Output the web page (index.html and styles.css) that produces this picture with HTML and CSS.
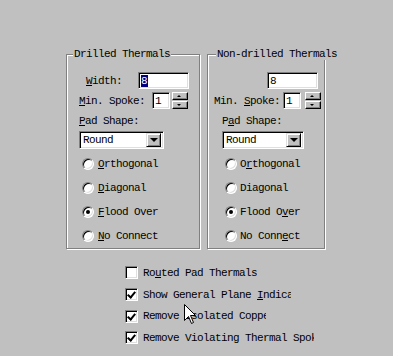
FILE: index.html
```html
<!DOCTYPE html>
<html lang="en">
<head>
  <meta charset="UTF-8" />
  <title>Thermals</title>
  <link rel="stylesheet" href="styles.css">
</head>
<body>
  <div class="dialog">
    <div class="groups">
      <div class="group drilled">
        <div class="legend">Drilled Thermals</div>
        <div class="row width-row">
          <span class="label"><u>W</u>idth:</span>
          <span class="field wide"><span class="sel">8</span></span>
        </div>
        <div class="row spoke-row">
          <span class="label"><u>M</u>in. Spoke:</span>
          <span class="field small">1</span>
          <span class="spin"><span class="up"></span><span class="down"></span></span>
        </div>
        <div class="pad-label"><u>P</u>ad Shape:</div>
        <div class="combo">
          <span class="combo-text">Round</span>
          <span class="combo-btn"></span>
        </div>
        <div class="radios">
          <div class="radio"><span class="dot"></span><span><u>O</u>rthogonal</span></div>
          <div class="radio"><span class="dot"></span><span><u>D</u>iagonal</span></div>
          <div class="radio"><span class="dot on"></span><span><u>F</u>lood Over</span></div>
          <div class="radio"><span class="dot"></span><span><u>N</u>o Connect</span></div>
        </div>
      </div>

      <div class="group nondrilled">
        <div class="legend">Non-drilled Thermals</div>
        <div class="row width-row">
          <span class="field wide">8</span>
        </div>
        <div class="row spoke-row">
          <span class="label">Min. <u>S</u>poke:</span>
          <span class="field small">1</span>
          <span class="spin"><span class="up"></span><span class="down"></span></span>
        </div>
        <div class="pad-label">P<u>a</u>d Shape:</div>
        <div class="combo">
          <span class="combo-text">Round</span>
          <span class="combo-btn"></span>
        </div>
        <div class="radios">
          <div class="radio"><span class="dot"></span><span>O<u>r</u>thogonal</span></div>
          <div class="radio"><span class="dot"></span><span>Diagonal</span></div>
          <div class="radio"><span class="dot on"></span><span>Flood O<u>v</u>er</span></div>
          <div class="radio"><span class="dot"></span><span>No Conn<u>e</u>ct</span></div>
        </div>
      </div>
    </div>

    <div class="checks">
      <div class="check"><span class="box"></span><span class="text c1">Ro<u>u</u>ted Pad Thermals</span></div>
      <div class="check"><span class="box on"></span><span class="text c2">Show General Plane <u>I</u>ndicators</span></div>
      <div class="check"><span class="box on"></span><span class="text c3">Remove Isolated Copper</span></div>
      <div class="check"><span class="box on"></span><span class="text c4">Remove Violating Thermal Spokes</span></div>
    </div>

    <svg class="pointer" width="13" height="21" viewBox="0 0 13 21">
      <path d="M0.5 0.5 L0.5 16.5 L4.5 12.5 L7.5 19.5 L9.5 18.5 L6.5 11.5 L11.5 11.5 Z" fill="#fff" stroke="#000" stroke-width="1"/>
    </svg>
  </div>
</body>
</html>
```

FILE: styles.css
```css
body {
  margin: 0;
  background: #c0c0c0;
  font-family: "Liberation Mono", "DejaVu Sans Mono", monospace;
  font-size: 11px;
  letter-spacing: -0.6px;
  color: #000;
}

.dialog {
  position: relative;
  width: 393px;
  height: 356px;
  overflow: hidden;
}

.groups {
  display: flex;
  gap: 7px;
  padding: 54px 0 0 66px;
}

.group {
  height: 195px;
  box-sizing: border-box;
  border: 1px solid #808080;
  box-shadow: 1px 1px 0 #fff, inset 1px 1px 0 #fff;
}

.drilled { width: 134px; }
.nondrilled { width: 118px; }

.legend {
  margin: -7px 0 0 6px;
  padding: 0 1px;
  width: fit-content;
  height: 12px;
  line-height: 12px;
  white-space: nowrap;
  background: #c0c0c0;
}

.nondrilled .legend { margin-left: 8px; }

.row {
  display: flex;
  align-items: center;
  height: 17px;
}

.width-row { margin-top: 12px; }
.spoke-row { margin-top: 3px; }

.drilled .width-row { padding-left: 19px; }
.drilled .width-row .label { width: 52px; }
.drilled .spoke-row { padding-left: 12px; }
.drilled .spoke-row .label { width: 73px; }

.nondrilled .width-row { padding-left: 59px; }
.nondrilled .spoke-row { padding-left: 6px; }
.nondrilled .spoke-row .label { width: 69px; }

.field {
  display: flex;
  align-items: center;
  height: 17px;
  box-sizing: border-box;
  padding-left: 2px;
  background: #fff;
  border-top: 1px solid #808080;
  border-left: 1px solid #808080;
  border-right: 1px solid #fff;
  border-bottom: 1px solid #fff;
  box-shadow: inset 1px 1px 0 #000, inset -1px -1px 0 #dfdfdf;
}

.wide { width: 51px; }
.small { width: 18px; }

.sel {
  background: #000080;
  color: #fff;
  line-height: 12px;
  padding-right: 1px;
}

.spin {
  display: flex;
  flex-direction: column;
  gap: 1px;
  margin-left: 2px;
}

.nondrilled .spin { margin-left: 4px; }

.up, .down {
  position: relative;
  width: 16px;
  height: 8px;
  box-sizing: border-box;
  background: #c0c0c0;
  border-top: 1px solid #fff;
  border-left: 1px solid #fff;
  border-right: 1px solid #000;
  border-bottom: 1px solid #000;
  box-shadow: inset -1px -1px 0 #808080;
}

.up::after, .down::after {
  content: "";
  position: absolute;
  left: 4px;
  top: 2px;
  border-left: 2px solid transparent;
  border-right: 2px solid transparent;
}

.up::after { border-bottom: 2px solid #000; }
.down::after { border-top: 2px solid #000; }

.pad-label {
  margin-top: 6px;
  height: 12px;
  line-height: 12px;
}

.drilled .pad-label, .drilled .combo { margin-left: 12px; }
.nondrilled .pad-label, .nondrilled .combo { margin-left: 14px; }

.combo {
  display: flex;
  align-items: center;
  justify-content: space-between;
  margin-top: 4px;
  height: 18px;
  box-sizing: border-box;
  background: #fff;
  border-top: 1px solid #808080;
  border-left: 1px solid #808080;
  border-right: 1px solid #fff;
  border-bottom: 1px solid #fff;
  box-shadow: inset 1px 1px 0 #000, inset -1px -1px 0 #dfdfdf;
  padding: 0 2px 0 3px;
}

.drilled .combo { width: 85px; }
.nondrilled .combo { width: 82px; }

.combo-btn {
  position: relative;
  width: 15px;
  height: 14px;
  box-sizing: border-box;
  background: #c0c0c0;
  border-top: 1px solid #dfdfdf;
  border-left: 1px solid #dfdfdf;
  border-right: 1px solid #000;
  border-bottom: 1px solid #000;
  box-shadow: inset 1px 1px 0 #fff, inset -1px -1px 0 #808080;
}

.combo-btn::after {
  content: "";
  position: absolute;
  left: 3px;
  top: 4px;
  border-left: 4px solid transparent;
  border-right: 4px solid transparent;
  border-top: 4px solid #000;
}

.radios {
  margin-top: 3px;
}

.radio {
  display: flex;
  align-items: center;
  height: 24px;
}

.drilled .radio { padding-left: 15px; gap: 4px; }
.nondrilled .radio { padding-left: 17px; gap: 3px; }

.dot {
  position: relative;
  width: 12px;
  height: 12px;
  box-sizing: border-box;
  border-radius: 50%;
  background: #fff;
  border: 1px solid;
  border-color: #808080 #fff #fff #808080;
  box-shadow: inset 1px 1px 0 #000, inset -1px -1px 0 #dfdfdf;
}

.dot.on::after {
  content: "";
  position: absolute;
  left: 3px;
  top: 3px;
  width: 4px;
  height: 4px;
  border-radius: 50%;
  background: #000;
}

.checks {
  margin-top: 13px;
  padding-left: 125px;
}

.check {
  display: flex;
  align-items: center;
  height: 21.7px;
  gap: 5px;
}

.box {
  position: relative;
  width: 13px;
  height: 13px;
  box-sizing: border-box;
  background: #fff;
  border: 1px solid;
  border-color: #808080 #fff #fff #808080;
  box-shadow: inset 1px 1px 0 #000, inset -1px -1px 0 #dfdfdf;
}

.box.on::after {
  content: "";
  position: absolute;
  left: 3px;
  top: 1px;
  width: 3px;
  height: 6px;
  border-right: 2px solid #000;
  border-bottom: 2px solid #000;
  transform: rotate(40deg);
}

.text {
  white-space: nowrap;
  overflow: hidden;
}

.c2 { width: 148px; }
.c3 { width: 123px; }
.c4 { width: 171px; }

.pointer {
  position: absolute;
  left: 184px;
  top: 304px;
}
```
